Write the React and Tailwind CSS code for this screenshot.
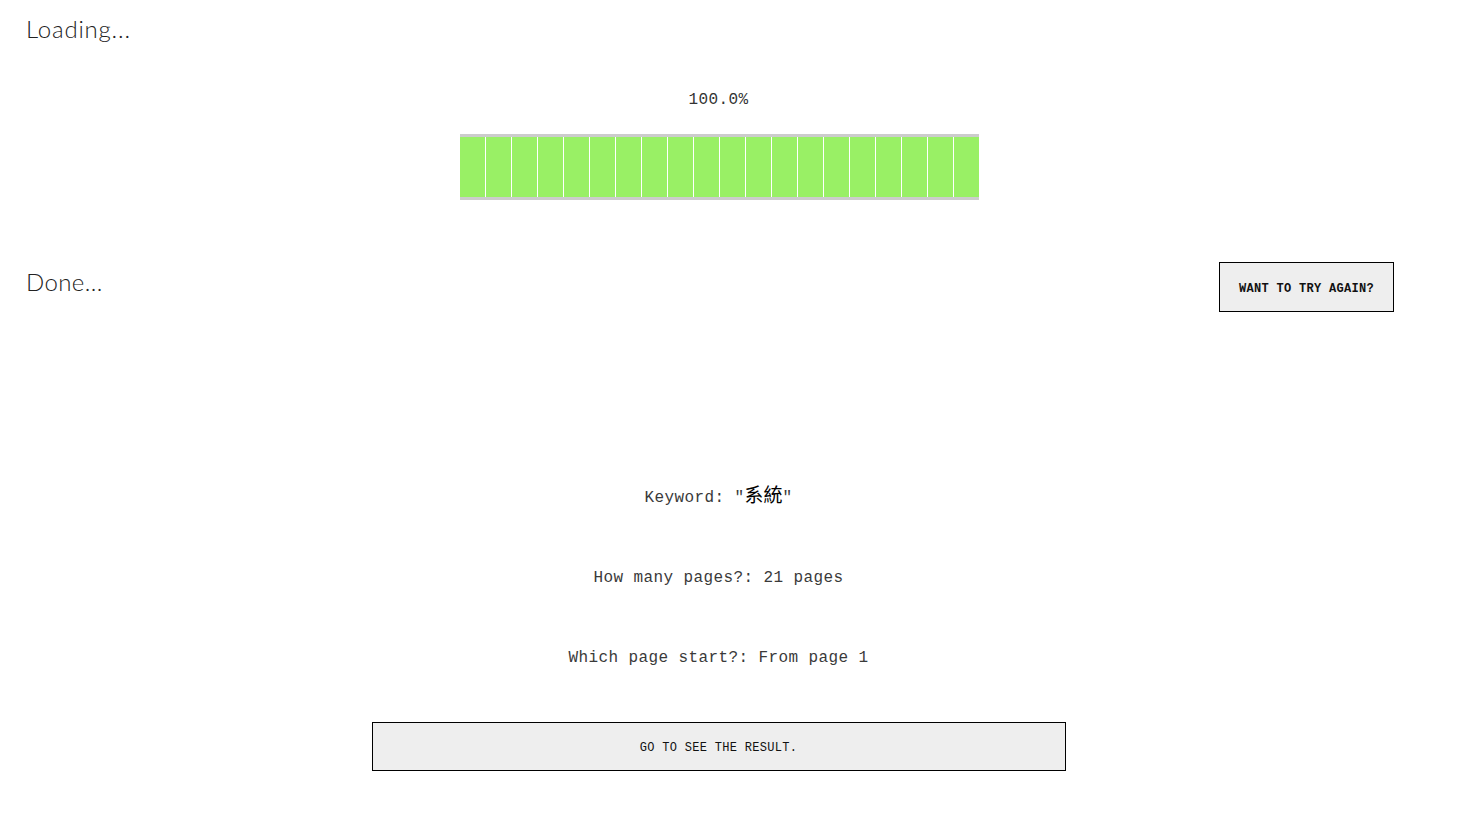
export default function App() {
  const cells = Array.from({ length: 20 });
  const mono = { fontFamily: '"Liberation Mono", "DejaVu Sans Mono", "Noto Sans CJK TC", monospace' };
  const heading = { fontFamily: 'Lato, "Open Sans", sans-serif' };

  return (
    <div className="min-h-screen bg-white text-[#222] w-[1437px]">
      {/* Loading section */}
      <section className="px-[26px] pt-[13px]">
        <h2 className="text-[24px] font-light leading-[32px] tracking-[0.8px]" style={heading}>
          Loading...
        </h2>
        <div className="mt-[44px] flex flex-col items-center">
          <p className="text-[16px] leading-[22px] tracking-[0.4px] text-[#333]" style={mono}>
            100.0%
          </p>
          <div className="ml-[2px] mt-[23px] flex w-[519px] border-y-[3px] border-[#cccccc] bg-white">
            {cells.map((_, i) => (
              <div
                key={i}
                className={"h-[60px] w-[25px] bg-[#99f065]" + (i > 0 ? " ml-px" : "")}
              />
            ))}
          </div>
        </div>
      </section>

      {/* Done section */}
      <section className="mt-[62px] flex items-start justify-between pl-[26px] pr-[43px]">
        <h2 className="mt-[4px] text-[24px] font-light leading-[32px] tracking-[0.4px]" style={heading}>
          Done...
        </h2>
        <button
          className="h-[50px] w-[175px] border border-black bg-[#eeeeee] pt-[3px] text-[12px] font-bold tracking-[0.3px] text-[#111]"
          style={mono}
        >
          WANT TO TRY AGAIN?
        </button>
      </section>

      {/* Summary */}
      <section className="mt-[175px] flex flex-col items-center gap-[58px] text-[16px] leading-[22px] tracking-[0.4px] text-[#3a3a3a]" style={mono}>
        <p>
          Keyword: "<span className="text-[19px] leading-none tracking-normal text-black">系統</span>"
        </p>
        <p>How many pages?: 21 pages</p>
        <p>Which page start?: From page 1</p>
      </section>

      <div className="mt-[53px] flex justify-center">
        <button
          className="h-[49px] w-[694px] border border-black bg-[#eeeeee] pt-[2px] text-[12px] tracking-[0.3px] text-[#111]"
          style={mono}
        >
          GO TO SEE THE RESULT.
        </button>
      </div>
    </div>
  );
}
